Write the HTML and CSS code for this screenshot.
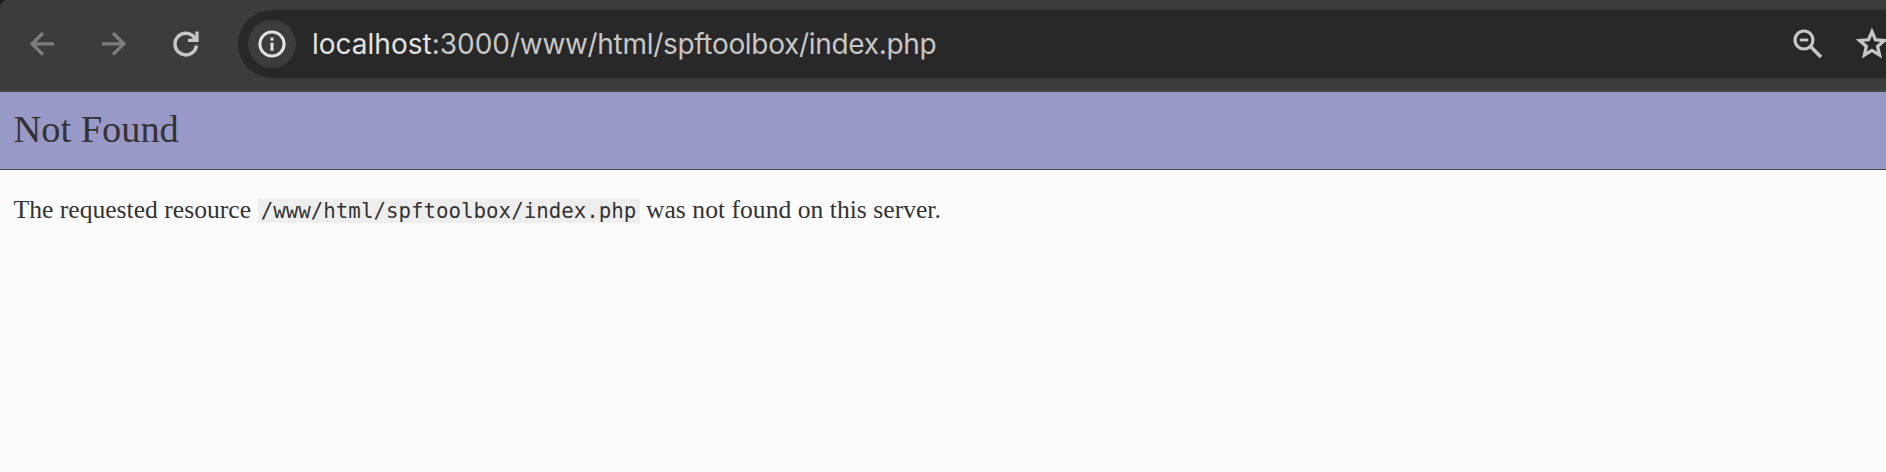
FILE: index.html
```
<!DOCTYPE html>
<html lang="en">
<head>
<meta charset="utf-8">
<title>Not Found</title>
<link rel="stylesheet" href="styles.css">
</head>
<body>
<div class="toolbar">
  <svg class="nav" viewBox="0 0 72 92"><path d="M54 43.8H33M43 33L32.2 43.8L43 54.6" fill="none" stroke="#7d7d7d" stroke-width="3.3"/></svg>
  <svg class="nav" viewBox="72 0 72 92"><path d="M102 43.8H123M113 33L123.8 43.8L113 54.6" fill="none" stroke="#7d7d7d" stroke-width="3.3"/></svg>
  <svg class="nav" viewBox="144 0 72 92"><path d="M196.5 45.5A10.8 10.8 0 1 1 194.6 37.8L196 40" fill="none" stroke="#c7c7c7" stroke-width="3.5"/><path d="M197 31.5V40.4H188" fill="none" stroke="#c7c7c7" stroke-width="3.3"/></svg>
  <div class="omnibox">
    <div class="info">
      <svg class="info-icon" viewBox="0 0 28 28"><circle cx="14" cy="14" r="12.1" fill="none" stroke="#e3e3e3" stroke-width="3"/><path d="M12.5 12.8h3v8h-3zM12.5 7.4h3v3h-3z" fill="#e3e3e3"/></svg>
    </div>
    <div class="url"><span class="host">localhost</span>:3000<span class="path">/www/html/spftoolbox/index.php</span></div>
    <svg class="actions" viewBox="1786 0 100 92"><g fill="none" stroke="#c7c7c7"><circle cx="1804" cy="40" r="9" stroke-width="3.2"/><path d="M1799.8 40h8.4" stroke-width="2.8"/><path d="M1810.5 46.5L1821 57" stroke-width="3.6"/></g><path transform="translate(1852.4 24.2) scale(1.63)" fill="#c7c7c7" d="M8.85 16.825L12 14.925L15.15 16.85L14.325 13.25L17.1 10.85L13.45 10.525L12 7.125L10.55 10.5L6.9 10.825L9.675 13.25ZM5.825 21L7.45 13.975L2 9.25L9.2 8.625L12 2L14.8 8.625L22 9.25L16.55 13.975L18.175 21L12 17.275Z" fill-rule="evenodd"/></svg>
  </div>
</div>
<h1 class="title">Not Found</h1>
<p class="message">The requested resource <code class="resource">/www/html/spftoolbox/index.php</code> was not found on this server.</p>
</body>
</html>
```
FILE: styles.css
```
body {
  margin: 0;
  height: 472px;
  overflow: hidden;
  background: #fcfcfc;
  color: #333;
  font-family: "Liberation Serif", serif;
}
.toolbar {
  box-sizing: border-box;
  display: flex;
  height: 92px;
  background: radial-gradient(circle at 9px 9px, #3c3c3c 9px, #1c1e1e 10px) 0 0 / 9px 9px no-repeat, #3c3c3c;
  border-bottom: 2px solid #474747;
}
.nav {
  flex: none;
  width: 72px;
  height: 92px;
}
.nav:nth-child(3) {
  margin-right: 22px;
}
.omnibox {
  flex: 1;
  display: flex;
  align-items: center;
  height: 68px;
  margin-top: 10px;
  padding-left: 10px;
  border-radius: 34px 0 0 34px;
  background: #282828;
}
.info {
  display: flex;
  align-items: center;
  justify-content: center;
  width: 48px;
  height: 48px;
  border-radius: 50%;
  background: #3c3c3c;
}
.info-icon {
  width: 28px;
  height: 28px;
}
.url {
  flex: 1;
  padding: 1px 0 0 16px;
  color: #c7c7c7;
  font: 28px/67px Inter, sans-serif;
  white-space: nowrap;
}
.host {
  color: #e3e3e3;
}
.path {
  letter-spacing: -0.31px;
}
.actions {
  width: 100px;
  height: 92px;
  margin: -10px 0 -14px;
}
.title {
  box-sizing: border-box;
  height: 78px;
  margin: 0;
  padding-left: 13.5px;
  border-bottom: 1px solid #4c4a50;
  background: #9999c8;
  font-size: 38.4px;
  font-weight: 400;
  line-height: 74px;
}
.message {
  margin: 25px 0 0 13.5px;
  font-size: 25.6px;
  line-height: 30px;
  word-spacing: 0.1px;
}
.resource {
  padding: 0 3.2px;
  background: #eee;
  font-family: "DejaVu Sans Mono", monospace;
  font-size: 20.8px;
}
```
